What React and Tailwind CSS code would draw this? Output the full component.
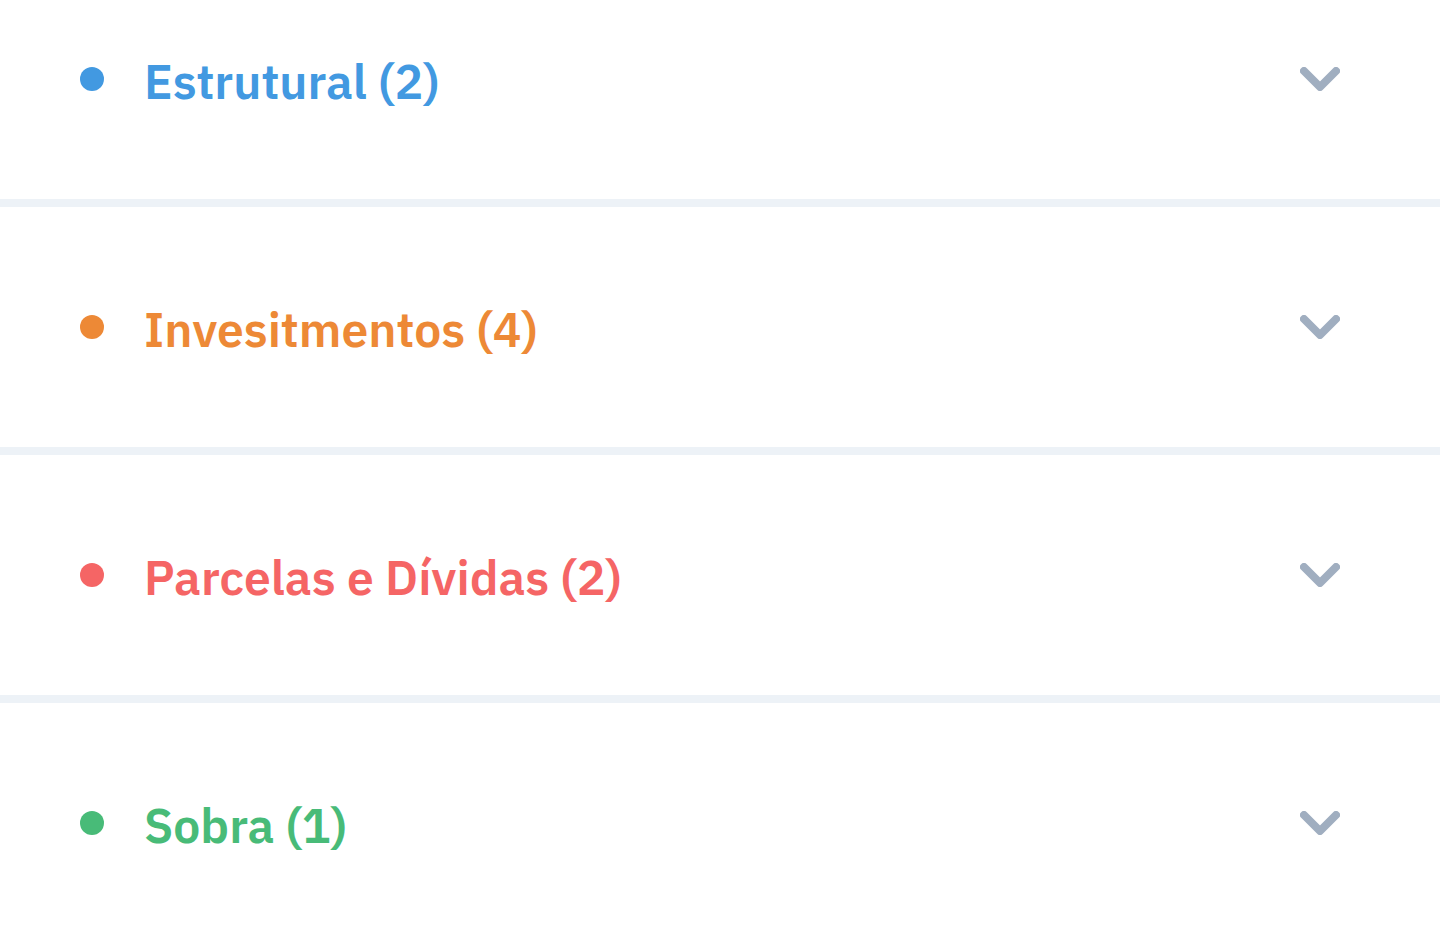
const groups = [
  { name: 'Estrutural', count: 2, text: 'text-[#4299e1]', dot: 'bg-[#4299e1]' },
  { name: 'Invesitmentos', count: 4, text: 'text-[#ed8936]', dot: 'bg-[#ed8936]' },
  { name: 'Parcelas e Dívidas', count: 2, text: 'text-[#f56565]', dot: 'bg-[#f56565]' },
  { name: 'Sobra', count: 1, text: 'text-[#48bb78]', dot: 'bg-[#48bb78]' },
];

function Chevron() {
  return (
    <svg className="h-6 w-10 shrink-0" viewBox="0 0 40 24" fill="none" stroke="#a0aec0" strokeWidth="8" strokeLinecap="round" strokeLinejoin="round" aria-hidden="true">
      <path d="M4 4 20 20 36 4" />
    </svg>
  );
}

function Group({ group }) {
  return (
    <li className="border-b-8 border-[#edf2f7] last:border-b-0">
      <button type="button" className="flex min-h-60 w-full items-center pr-25 pl-20 text-left">
        <span className={`size-6 shrink-0 rounded-full ${group.dot}`} />
        <span className={`grow pt-1 pl-10 text-5xl font-semibold antialiased ${group.text}`}>
          {group.name} ({group.count})
        </span>
        <Chevron />
      </button>
    </li>
  );
}

export default function App() {
  return (
    <main className="h-screen overflow-hidden bg-white font-['IBM_Plex_Sans','Noto_Sans',sans-serif]">
      <ul className="-mt-[41px]">
        {groups.map((group) => (
          <Group key={group.name} group={group} />
        ))}
      </ul>
    </main>
  );
}
